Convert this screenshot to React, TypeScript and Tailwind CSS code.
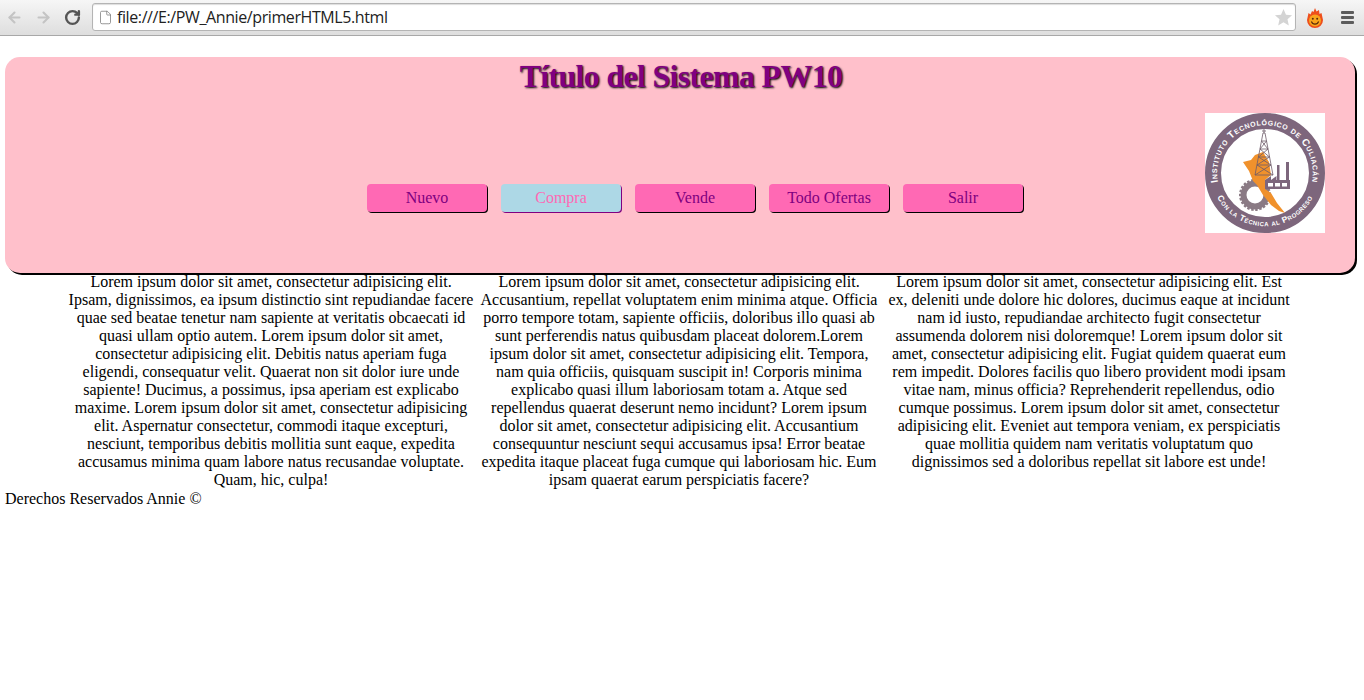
import { ArrowLeft, ArrowRight, RotateCw, File } from "lucide-react";

const columns = [
  `Lorem ipsum dolor sit amet, consectetur adipisicing elit.
Ipsam, dignissimos, ea ipsum distinctio sint repudiandae facere
quae sed beatae tenetur nam sapiente at veritatis obcaecati id
quasi ullam optio autem. Lorem ipsum dolor sit amet,
consectetur adipisicing elit. Debitis natus aperiam fuga
eligendi, consequatur velit. Quaerat non sit dolor iure unde
sapiente! Ducimus, a possimus, ipsa aperiam est explicabo
maxime. Lorem ipsum dolor sit amet, consectetur adipisicing
elit. Aspernatur consectetur, commodi itaque excepturi,
nesciunt, temporibus debitis mollitia sunt eaque, expedita
accusamus minima quam labore natus recusandae voluptate.
Quam, hic, culpa!`,
  `Lorem ipsum dolor sit amet, consectetur adipisicing elit.
Accusantium, repellat voluptatem enim minima atque. Officia
porro tempore totam, sapiente officiis, doloribus illo quasi ab
sunt perferendis natus quibusdam placeat dolorem.Lorem
ipsum dolor sit amet, consectetur adipisicing elit. Tempora,
nam quia officiis, quisquam suscipit in! Corporis minima
explicabo quasi illum laboriosam totam a. Atque sed
repellendus quaerat deserunt nemo incidunt? Lorem ipsum
dolor sit amet, consectetur adipisicing elit. Accusantium
consequuntur nesciunt sequi accusamus ipsa! Error beatae
expedita itaque placeat fuga cumque qui laboriosam hic. Eum
ipsam quaerat earum perspiciatis facere?`,
  `Lorem ipsum dolor sit amet, consectetur adipisicing elit. Est
ex, deleniti unde dolore hic dolores, ducimus eaque at incidunt
nam id iusto, repudiandae architecto fugit consectetur
assumenda dolorem nisi doloremque! Lorem ipsum dolor sit
amet, consectetur adipisicing elit. Fugiat quidem quaerat eum
rem impedit. Dolores facilis quo libero provident modi ipsam
vitae nam, minus officia? Reprehenderit repellendus, odio
cumque possimus. Lorem ipsum dolor sit amet, consectetur
adipisicing elit. Eveniet aut tempora veniam, ex perspiciatis
quae mollitia quidem nam veritatis voluptatum quo
dignissimos sed a doloribus repellat sit labore est unde!`,
];

const menu = ["Nuevo", "Compra", "Vende", "Todo Ofertas", "Salir"];

const Logo = () => (
  <svg viewBox="0 0 120 120" className="w-[120px] h-[120px] bg-white shrink-0">
    <defs>
      <path id="arcTop" d="M 14.3 74 A 47.8 47.8 0 1 1 105.7 74" />
      <path id="arcBottom" d="M 12 84 A 54 54 0 0 0 108 84" />
    </defs>
    <circle cx="60" cy="60" r="52" fill="none" stroke="#7d667c" strokeWidth="16" />
    <text fontFamily="Liberation Sans, sans-serif" fontSize="10" fontWeight="700" fill="#fff" letterSpacing="0.6" style={{ fontVariant: "small-caps" }}>
      <textPath href="#arcTop" startOffset="50%" textAnchor="middle">
        Instituto Tecnológico de Culiacán
      </textPath>
    </text>
    <text fontFamily="Liberation Sans, sans-serif" fontSize="8.5" fontWeight="700" fill="#fff" letterSpacing="0.45" style={{ fontVariant: "small-caps" }}>
      <textPath href="#arcBottom" startOffset="50%" textAnchor="middle">
        Con la Técnica al Progreso
      </textPath>
    </text>
    {/* gear */}
    <circle cx="50" cy="82" r="11.5" fill="none" stroke="#8a7a84" strokeWidth="6" />
    <circle cx="50" cy="82" r="14.5" fill="none" stroke="#8a7a84" strokeWidth="3" strokeDasharray="2.4 1.6" />
    {/* state outline */}
    <path d="M 38 49 L 46 47 L 50 42 L 58 39 L 64 49 L 66 62 L 60 67 L 60 76 L 66 80 L 72 90 L 80 100 L 74 98 L 66 92 L 58 82 L 52 72 L 48 68 L 44 58 Z" fill="#f0912c" />
    {/* oil derrick */}
    <g stroke="#6d5a68" strokeWidth="0.8" fill="none">
      <path d="M 50 62 L 58 20 L 60 20 L 68 62 Z" />
      <path d="M 56.5 28 L 61.5 28 M 55 36 L 63 36 M 53.5 44 L 64.5 44 M 52 52 L 66 52 M 56.5 28 L 63 36 M 61.5 28 L 55 36 M 55 36 L 64.5 44 M 63 36 L 53.5 44 M 53.5 44 L 66 52 M 64.5 44 L 52 52 M 52 52 L 68 62 M 66 52 L 50 62" />
      <path d="M 59 16 L 59 20 M 57 18 L 61 18" />
    </g>
    {/* factory */}
    <path d="M 60 76 L 60 67 L 66 63 L 66 67 L 71.5 63 L 71.5 67 L 72 67 L 72 52 L 74.5 52 L 74.5 67 L 81 67 L 81 49 L 84 49 L 84 67 L 85 67 L 85 76 Z" fill="#7d667c" />
    <rect x="63" y="70" width="5" height="3.5" fill="#fff" />
    <rect x="70" y="70" width="5" height="3.5" fill="#fff" />
    <rect x="77" y="70" width="5" height="3.5" fill="#fff" />
  </svg>
);

const Browser = () => (
  <div className="h-9 flex items-center bg-gradient-to-b from-[#f6f6f6] to-[#dedede] border-b border-[#a8a8a8] shrink-0">
    <div className="w-[92px] flex items-center pl-[6px] shrink-0">
      <ArrowLeft size={17} strokeWidth={3} className="text-[#c4c4c4]" />
      <ArrowRight size={17} strokeWidth={3} className="text-[#c4c4c4] ml-[12px]" />
      <RotateCw size={17} strokeWidth={3.4} className="text-[#555555] ml-[12px]" />
    </div>
    <div className="w-[1204px] h-[28px] mt-[-1px] flex items-center bg-white border border-[#b4b4b4] rounded-[3px] pl-[5px] pr-[2px] shadow-[inset_0_1px_1px_#dddddd]">
      <File size={15} strokeWidth={1.2} className="text-[#777777]" />
      <span className="ml-[4px] text-[16px] text-[#222222] font-['Open_Sans',sans-serif] tracking-[-0.4px]">
        file:///E:/PW_Annie/primerHTML5.html
      </span>
      <svg viewBox="0 0 20 20" className="w-[19px] h-[19px] ml-auto">
        <path d="M10 1 L12.6 7 L19 7.6 L14.2 11.9 L15.6 18.3 L10 15 L4.4 18.3 L5.8 11.9 L1 7.6 L7.4 7 Z" fill="#d4d4d4" />
      </svg>
    </div>
    <svg viewBox="0 0 18 20" className="w-[18px] h-[20px] ml-[10px]">
      <path d="M9 0 L10.5 3.5 L13 2 L13.5 6 L15.5 5 L17 12 A8 8 0 0 1 1 12 L2.5 5 L4.5 6.5 L6 3 L7.5 4 Z" fill="#ee4f1c" />
      <circle cx="9" cy="12.5" r="6" fill="#f9a51d" />
      <circle cx="6.8" cy="10.8" r="1" fill="#5a2b0c" />
      <circle cx="11.2" cy="10.8" r="1" fill="#5a2b0c" />
      <path d="M5.4 13.5 A3.8 3.8 0 0 0 12.6 13.5" fill="none" stroke="#5a2b0c" strokeWidth="1.1" />
    </svg>
    <div className="ml-[17px] w-[13px] flex flex-col gap-[2px]">
      <span className="h-[3px] bg-[#5c5c5c] rounded-[1px]" />
      <span className="h-[3px] bg-[#5c5c5c] rounded-[1px]" />
      <span className="h-[3px] bg-[#5c5c5c] rounded-[1px]" />
    </div>
  </div>
);

export default function App() {
  return (
    <div className="min-h-[700px] bg-white text-black font-['Liberation_Serif',serif] text-[16px] leading-[18px]">
      <Browser />
      <div className="pl-[5px] pr-[9px] pt-[21px]">
        <header className="h-[216px] bg-[#ffc0cb] rounded-[15px] shadow-[2px_2px_0_#000000]">
          <h1 className="pt-[1px] pl-[2px] text-center text-[32px] leading-[37px] font-bold tracking-[-0.7px] text-[#800080] [text-shadow:1px_1px_2px_#000000]">
            Título del Sistema PW10
          </h1>
          <div className="flex items-start justify-between pt-[18px] pl-[362px] pr-[30px]">
            <nav className="flex gap-[14px] mt-[71px]">
              {menu.map((item) => (
                <a
                  key={item}
                  className={
                    item === "Compra"
                      ? "w-[120px] h-[28px] flex items-center justify-center rounded-[4px] bg-[#add8e6] text-[#ff69b4] shadow-[1px_1px_0_#800080]"
                      : "w-[120px] h-[28px] flex items-center justify-center rounded-[4px] bg-[#ff69b4] text-[#800080] shadow-[1px_1px_0_#000000]"
                  }
                >
                  {item}
                </a>
              ))}
            </nav>
            <Logo />
          </div>
        </header>
        <main className="flex text-center whitespace-pre-line pl-[62px]">
          <p className="w-[408px]">{columns[0]}</p>
          <p className="w-[408px]">{columns[1]}</p>
          <p className="w-[412px]">{columns[2]}</p>
        </main>
        <footer className="mt-[1px]">Derechos Reservados Annie ©</footer>
      </div>
    </div>
  );
}
